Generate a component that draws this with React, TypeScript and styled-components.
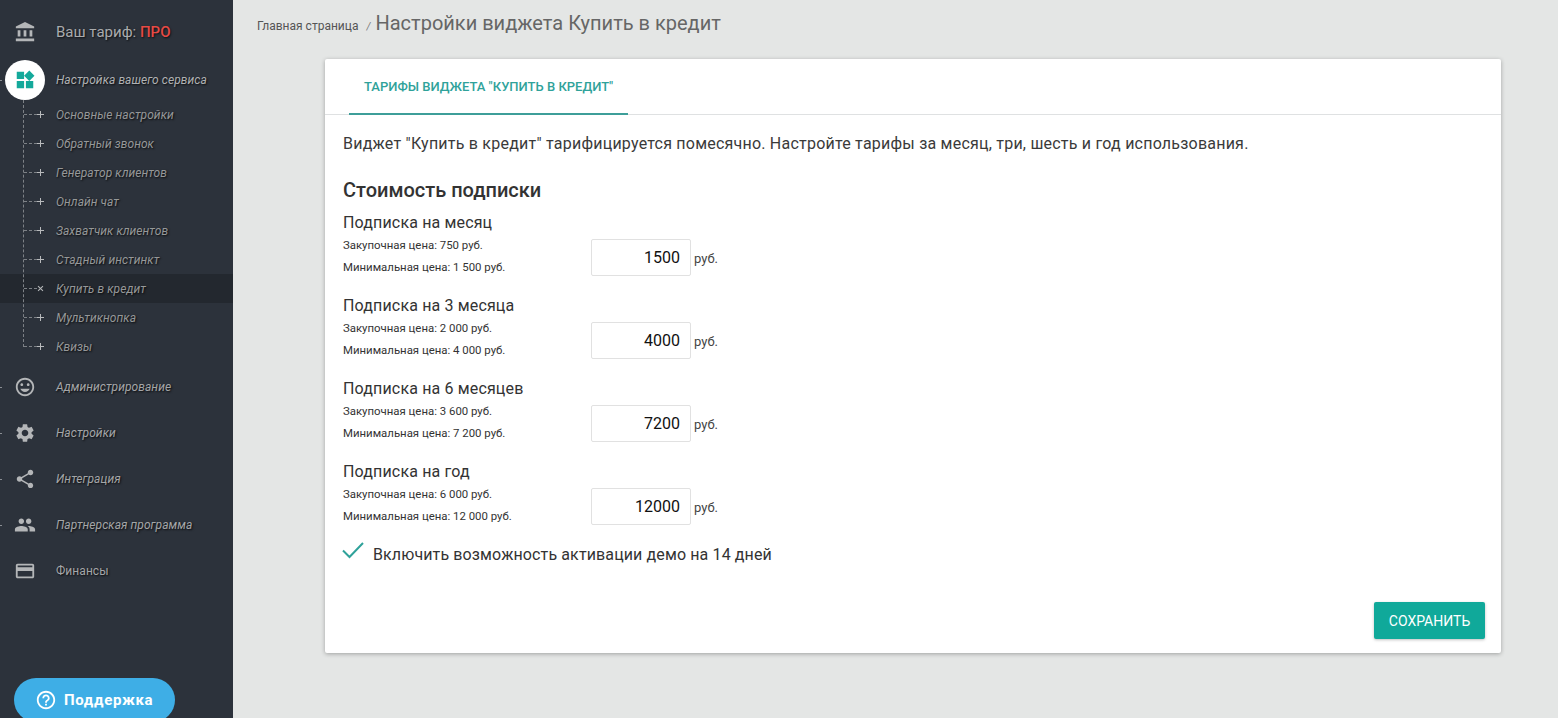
import React from "react";
import styled, { createGlobalStyle } from "styled-components";
import {
  MdAccountBalance,
  MdWidgets,
  MdTagFaces,
  MdSettings,
  MdShare,
  MdPeople,
  MdCreditCard,
  MdHelpOutline,
} from "react-icons/md";

const Global = createGlobalStyle`
  html, body { margin: 0; padding: 0; height: 100%; }
  body { font-family: Roboto, "Liberation Sans", sans-serif; background: #e4e6e5; overflow: hidden; }
  * { box-sizing: border-box; }
`;

const Page = styled.div`
  display: flex;
  width: 1558px;
  height: 718px;
  overflow: hidden;
`;

const Sidebar = styled.aside`
  width: 233px;
  height: 718px;
  flex: none;
  display: flex;
  flex-direction: column;
  background: #2c323b;
  overflow: hidden;
`;

const PlanRow = styled.div`
  display: flex;
  align-items: center;
  height: 46px;
  margin-top: 9px;
  padding-left: 14px;
  color: #c2c4c6;
`;

const IconSlot = styled.span`
  width: 42px;
  flex: none;
  display: flex;
  align-items: center;
  svg { display: block; width: 22px; height: 22px; color: #b4b6b8; }
`;

const PlanText = styled.span`
  font-size: 15px;
  color: #a9abad;
  text-shadow: 1px 1px 2px rgba(0, 0, 0, 0.7);
`;

const PlanName = styled.span`
  color: #e64a45;
  font-weight: 500;
`;

const MenuRow = styled.div<{ $plain?: boolean }>`
  position: relative;
  display: flex;
  align-items: center;
  height: 46px;
  padding-left: 14px;
  font-size: 12px;
  letter-spacing: 0.06px;
  font-style: ${(p) => (p.$plain ? "normal" : "italic")};
  color: #a4a6a8;
  text-shadow: 1px 1px 2px rgba(0, 0, 0, 0.8);
  &::before {
    content: ${(p) => (p.$plain ? "none" : '""')};
    position: absolute;
    left: 0;
    top: 50%;
    width: 2px;
    border-top: 1px dashed #8b8f94;
  }
`;

const ActiveRow = styled(MenuRow)`
  height: 40px;
  margin-top: 5px;
  padding-left: 56px;
  color: #b0b2b4;
`;

const Bubble = styled.span`
  position: absolute;
  left: 5px;
  top: 0;
  width: 40px;
  height: 40px;
  border-radius: 50%;
  background: #fff;
  display: flex;
  align-items: center;
  justify-content: center;
  svg { display: block; width: 22px; height: 22px; color: #14a99b; }
`;

const SubList = styled.ul`
  position: relative;
  list-style: none;
  margin: 0 0 3px;
  padding: 0;
  &::before {
    content: "";
    position: absolute;
    z-index: 1;
    left: 23px;
    top: 0;
    height: 247px;
    border-left: 1px dashed #7d8186;
  }
`;

const SubRow = styled.li<{ $active?: boolean }>`
  position: relative;
  height: 29px;
  display: flex;
  align-items: center;
  padding-left: 56px;
  font-size: 12px;
  letter-spacing: 0.06px;
  font-style: italic;
  color: #969899;
  text-shadow: 1px 1px 2px rgba(0, 0, 0, 0.8);
  background: ${(p) => (p.$active ? "#23282f" : "transparent")};
  &::before {
    content: "";
    position: absolute;
    left: 24px;
    top: 14px;
    width: 13px;
    border-top: 1px dashed #7d8186;
  }
`;

const Mark = styled.span<{ $active?: boolean }>`
  position: absolute;
  left: 37px;
  top: 11px;
  width: 7px;
  height: 7px;
  transform: ${(p) => (p.$active ? "rotate(45deg)" : "none")};
  &::before, &::after {
    content: "";
    position: absolute;
    background: #b8babc;
  }
  &::before { left: 0; top: 3px; width: 7px; height: 1px; }
  &::after { left: 3px; top: 0; width: 1px; height: 7px; }
`;

const Support = styled.button`
  margin: auto 0 -4px 14px;
  width: 161px;
  height: 44px;
  flex: none;
  padding: 0 0 0 21px;
  display: flex;
  align-items: center;
  gap: 7px;
  border: 0;
  border-radius: 22px;
  background: #3eaee6;
  color: #fff;
  font-family: inherit;
  font-size: 15px;
  font-weight: 700;
  letter-spacing: 0.65px;
  svg { display: block; width: 22px; height: 22px; }
`;

const Main = styled.main`
  flex: 1;
  min-width: 0;
  padding-left: 24px;
`;

const Crumbs = styled.div`
  display: flex;
  align-items: baseline;
  height: 59px;
  padding-top: 11px;
  color: #666;
`;

const Crumb = styled.span`
  font-size: 12px;
  color: #555;
`;

const Sep = styled.span`
  font-size: 10px;
  margin: 0 5px 0 8px;
  font-style: italic;
  color: #777;
`;

const Title = styled.h1`
  margin: 0;
  font-size: 20px;
  line-height: 24px;
  font-weight: 400;
  color: #666;
`;

const Card = styled.section`
  margin-left: 68px;
  width: 1176px;
  height: 594px;
  background: #fff;
  border-radius: 2px;
  box-shadow: 0 1px 4px rgba(0, 0, 0, 0.3);
  display: flex;
  flex-direction: column;
`;

const TabBar = styled.div`
  height: 56px;
  padding-left: 24px;
  border-bottom: 1px solid #dfe1e2;
  display: flex;
`;

const Tab = styled.div`
  width: 279px;
  height: 56px;
  padding-left: 15px;
  border-bottom: 2px solid #3d9e99;
  display: flex;
  align-items: center;
  font-size: 13px;
  font-weight: 500;
  color: #2fa29a;
  text-transform: uppercase;
`;

const Body = styled.div`
  flex: 1;
  padding: 0 16px 14px 18px;
  display: flex;
  flex-direction: column;
`;

const Intro = styled.p`
  margin: 17px 0 0;
  font-size: 16px;
  line-height: 24px;
  letter-spacing: 0.22px;
  color: #3a3a3a;
`;

const Heading = styled.h2`
  margin: 22px 0 0;
  font-size: 20px;
  line-height: 24px;
  font-weight: 500;
  color: #333;
`;

const Rows = styled.div`
  margin-top: 9px;
  display: flex;
  flex-direction: column;
  gap: 11px;
`;

const PriceRow = styled.div`
  display: grid;
  grid-template-columns: 248px 100px auto;
  grid-template-rows: 22px 23px 21px;
  height: 72px;
  align-items: center;
`;

const RowTitle = styled.div`
  grid-column: 1 / 2;
  font-size: 16px;
  letter-spacing: 0.15px;
  color: #333;
`;

const Note = styled.div`
  grid-column: 1 / 2;
  font-size: 11.4px;
  line-height: 20px;
  color: #333;
`;

const Field = styled.input`
  grid-column: 2;
  grid-row: 1 / 4;
  align-self: start;
  margin-top: 28px;
  width: 100px;
  height: 37px;
  padding: 0 10px;
  border: 1px solid #e1e1e1;
  border-radius: 2px;
  background: #fff;
  text-align: right;
  font-family: inherit;
  font-size: 16px;
  color: #111;
  outline: none;
`;

const Unit = styled.span`
  grid-column: 3;
  grid-row: 1 / 4;
  align-self: start;
  margin: 40px 0 0 3px;
  font-size: 13px;
  color: #444;
`;

const CheckRow = styled.label`
  margin-top: 8px;
  display: flex;
  align-items: center;
  height: 28px;
  font-size: 16px;
  letter-spacing: 0.12px;
  color: #333;
  svg { display: block; width: 22px; height: 18px; margin: -8px 9px 0 -1px; }
`;

const Footer = styled.div`
  margin-top: auto;
  display: flex;
  justify-content: flex-end;
`;

const SaveButton = styled.button`
  width: 111px;
  height: 37px;
  border: 0;
  border-radius: 2px;
  background: #10a99a;
  color: #fff;
  font-family: inherit;
  font-size: 14px;
  font-weight: 400;
  text-transform: uppercase;
  box-shadow: 0 1px 3px rgba(0, 0, 0, 0.25);
`;

const subs = [
  "Основные настройки",
  "Обратный звонок",
  "Генератор клиентов",
  "Онлайн чат",
  "Захватчик клиентов",
  "Стадный инстинкт",
  "Купить в кредит",
  "Мультикнопка",
  "Квизы",
];

const menu = [
  { label: "Администрирование", Icon: MdTagFaces },
  { label: "Настройки", Icon: MdSettings },
  { label: "Интеграция", Icon: MdShare },
  { label: "Партнерская программа", Icon: MdPeople },
  { label: "Финансы", Icon: MdCreditCard, plain: true },
];

const prices = [
  { title: "Подписка на месяц", buy: "750", min: "1 500", value: "1500" },
  { title: "Подписка на 3 месяца", buy: "2 000", min: "4 000", value: "4000" },
  { title: "Подписка на 6 месяцев", buy: "3 600", min: "7 200", value: "7200" },
  { title: "Подписка на год", buy: "6 000", min: "12 000", value: "12000" },
];

export default function App() {
  return (
    <Page>
      <Global />
      <Sidebar>
        <PlanRow>
          <IconSlot><MdAccountBalance /></IconSlot>
          <PlanText>Ваш тариф: <PlanName>ПРО</PlanName></PlanText>
        </PlanRow>
        <ActiveRow>
          <Bubble><MdWidgets /></Bubble>
          Настройка вашего сервиса
        </ActiveRow>
        <SubList>
          {subs.map((s) => {
            const active = s === "Купить в кредит";
            return (
              <SubRow key={s} $active={active}>
                <Mark $active={active} />
                {s}
              </SubRow>
            );
          })}
        </SubList>
        {menu.map(({ label, Icon, plain }) => (
          <MenuRow key={label} $plain={plain}>
            <IconSlot><Icon /></IconSlot>
            {label}
          </MenuRow>
        ))}
        <Support><MdHelpOutline />Поддержка</Support>
      </Sidebar>
      <Main>
        <Crumbs>
          <Crumb>Главная страница</Crumb>
          <Sep>/</Sep>
          <Title>Настройки виджета Купить в кредит</Title>
        </Crumbs>
        <Card>
          <TabBar>
            <Tab>Тарифы виджета "Купить в кредит"</Tab>
          </TabBar>
          <Body>
            <Intro>Виджет "Купить в кредит" тарифицируется помесячно. Настройте тарифы за месяц, три, шесть и год использования.</Intro>
            <Heading>Стоимость подписки</Heading>
            <Rows>
              {prices.map((p) => (
                <PriceRow key={p.title}>
                  <RowTitle>{p.title}</RowTitle>
                  <Note>Закупочная цена: {p.buy} руб.</Note>
                  <Note>Минимальная цена: {p.min} руб.</Note>
                  <Field defaultValue={p.value} />
                  <Unit>руб.</Unit>
                </PriceRow>
              ))}
            </Rows>
            <CheckRow>
              <svg viewBox="0 0 22 18" fill="none">
                <path d="M1 9.5 L7.5 16 L21 2" stroke="#2fa29a" strokeWidth="2" />
              </svg>
              Включить возможность активации демо на 14 дней
            </CheckRow>
            <Footer>
              <SaveButton>Сохранить</SaveButton>
            </Footer>
          </Body>
        </Card>
      </Main>
    </Page>
  );
}
